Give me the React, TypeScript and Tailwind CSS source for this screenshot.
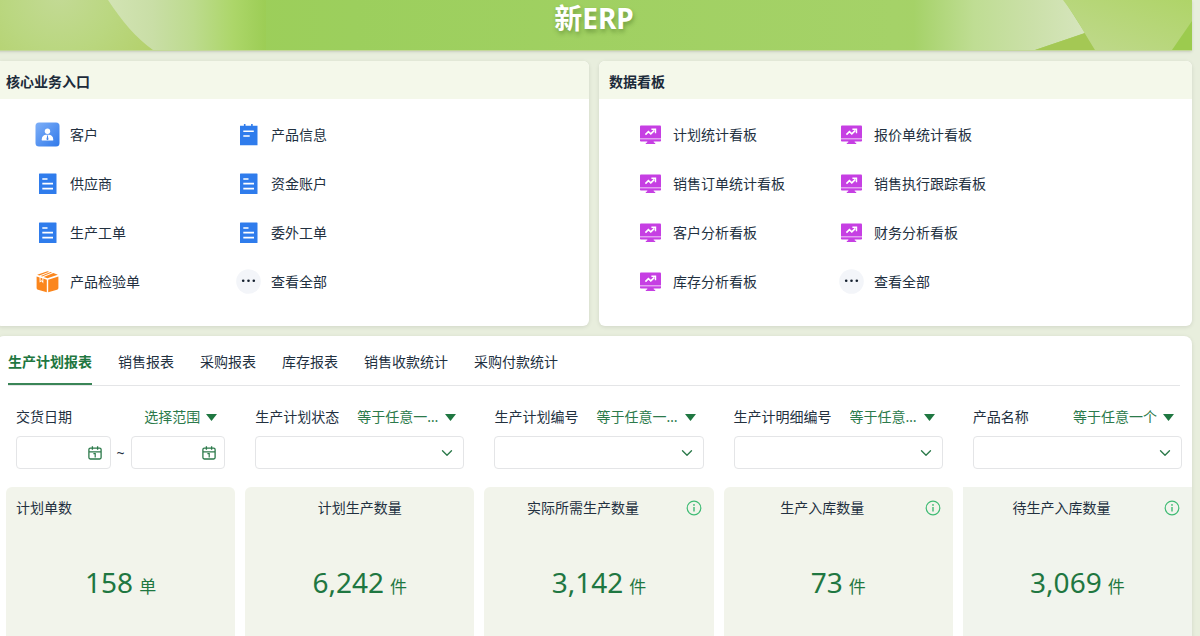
import React, { useState } from 'react'
import { ChevronDown } from 'lucide-react'
import clsx from 'clsx'

type IconName = 'customer' | 'notepad' | 'doc' | 'box' | 'monitor' | 'more'

const coreEntries: { label: string; icon: IconName }[] = [
  { label: '客户', icon: 'customer' },
  { label: '产品信息', icon: 'notepad' },
  { label: '供应商', icon: 'doc' },
  { label: '资金账户', icon: 'doc' },
  { label: '生产工单', icon: 'doc' },
  { label: '委外工单', icon: 'doc' },
  { label: '产品检验单', icon: 'box' },
  { label: '查看全部', icon: 'more' },
]

const boardEntries: { label: string; icon: IconName }[] = [
  { label: '计划统计看板', icon: 'monitor' },
  { label: '报价单统计看板', icon: 'monitor' },
  { label: '销售订单统计看板', icon: 'monitor' },
  { label: '销售执行跟踪看板', icon: 'monitor' },
  { label: '客户分析看板', icon: 'monitor' },
  { label: '财务分析看板', icon: 'monitor' },
  { label: '库存分析看板', icon: 'monitor' },
  { label: '查看全部', icon: 'more' },
]

const tabs = ['生产计划报表', '销售报表', '采购报表', '库存报表', '销售收款统计', '采购付款统计']

const selectFilters = ['生产计划状态', '生产计划编号', '生产计明细编号', '产品名称']

const stats = [
  { title: '计划单数', value: '158', unit: '单', align: 'left', info: false },
  { title: '计划生产数量', value: '6,242', unit: '件', align: 'center', info: false },
  { title: '实际所需生产数量', value: '3,142', unit: '件', align: 'center', info: true },
  { title: '生产入库数量', value: '73', unit: '件', align: 'center', info: true },
  { title: '待生产入库数量', value: '3,069', unit: '件', align: 'center', info: true },
]

function EntryIcon({ name }: { name: IconName }) {
  return (
    <svg viewBox="0 0 25 25" className="size-[25px] shrink-0" aria-hidden="true">
      {name === 'customer' && (
        <>
          <defs>
            <linearGradient id="customerBg" x1="0" y1="0" x2="1" y2="1">
              <stop offset="0" stopColor="#7fb0f8" />
              <stop offset="1" stopColor="#3079ea" />
            </linearGradient>
          </defs>
          <rect x="0.5" y="0.5" width="24" height="24" rx="3.5" fill="url(#customerBg)" />
          <circle cx="12.5" cy="9.3" r="2.7" fill="#fff" />
          <path d="M6.8 18.6v-1.4c0-2.6 2-4.4 4.4-4.4h2.6c2.4 0 4.4 1.8 4.4 4.4v1.4z" fill="#fff" />
          <path d="M11.8 13.4h1.4l-.3 1.2.7 2.6-1.1 1.1-1.1-1.1.7-2.6z" fill="#4285ee" />
        </>
      )}
      {name === 'notepad' && (
        <>
          <path d="M4 3.8h3.9V2h1.6v1.8h5.6V2h1.6v1.8h4.8V23.3H4z" fill="#2f7cec" />
          <path d="M7.3 9.3h10.5M7.3 14h6.4" stroke="#fff" strokeWidth="1.6" />
        </>
      )}
      {name === 'doc' && (
        <>
          <rect x="4" y="2.5" width="17.5" height="20.5" rx="0.6" fill="#2f7cec" />
          <path d="M7.3 8h5.2M7.3 12.6h10.7M7.3 17.6h10.7" stroke="#fff" strokeWidth="1.6" />
        </>
      )}
      {name === 'box' && (
        <>
          <path d="M1.6 7.4 4.6 8.4v5l2-1.2 1.7 2.2V9.6l3.5 1.1V23.2L3 20.7c-.8-.2-1.4-.9-1.4-1.7z" fill="#fb861d" />
          <path d="M5.5 8.7l1.9.6v2.8l-.7-.9-1.2.7z" fill="#fb861d" />
          <path d="M23.4 7.4 13.2 10.7V23.2L22 20.7c.8-.2 1.4-.9 1.4-1.7z" fill="#fb861d" />
          <path d="M2.2 5.8 12.4 2.2 14.2 2.7 4.4 6.5z" fill="#fb861d" />
          <path d="M5.8 7 15.6 3.1 17 3.5 7.2 7.4z" fill="#fb861d" />
          <path d="M8.6 7.9 18.4 4 22.8 5.8 12.5 9.2z" fill="#fb861d" />
        </>
      )}
      {name === 'monitor' && (
        <>
          <path d="M2 4.7c0-.7.5-1.2 1.2-1.2h18.6c.7 0 1.2.5 1.2 1.2v11.7H2z" fill="#c63fe3" />
          <path d="M2 17.2h21v1.4c0 .6-.5 1-1.2 1H15.6l.4 1.1h1.2v1.2H7.8v-1.2H9l.4-1.1H3.2c-.7 0-1.2-.4-1.2-1z" fill="#c63fe3" />
          <path d="m7.4 12.6 3-2.9 2.4 2.1 3.6-3.4" stroke="#fff" strokeWidth="1.7" fill="none" />
          <path d="M13.4 7.2h4.1v4" stroke="#fff" strokeWidth="1.4" fill="none" />
        </>
      )}
      {name === 'more' && (
        <>
          <circle cx="12.5" cy="12.5" r="12.3" fill="#f3f5f9" />
          <circle cx="7.2" cy="11.8" r="1.3" fill="#15202f" />
          <circle cx="12.5" cy="11.8" r="1.3" fill="#15202f" />
          <circle cx="17.8" cy="11.8" r="1.3" fill="#15202f" />
        </>
      )}
    </svg>
  )
}

function CalendarIcon() {
  return (
    <svg viewBox="0 0 14 14" className="size-3.5" fill="none" stroke="#2c7a4b" aria-hidden="true">
      <rect x="0.9" y="2.2" width="12.2" height="10.8" rx="1.4" strokeWidth="1.3" />
      <path d="M1 5.8h12M4.4.3v3.4M9.6.3v3.4" strokeWidth="1.3" />
      <path d="M5.4 7.6h1.8v3.8" strokeWidth="1.2" />
    </svg>
  )
}

function InfoIcon() {
  return (
    <svg viewBox="0 0 16 16" className="size-4" fill="none" aria-hidden="true">
      <circle cx="8" cy="8" r="6.8" stroke="#3fbb74" strokeWidth="1.2" />
      <path d="M8 7v4.6" stroke="#3fbb74" strokeWidth="1.4" />
      <circle cx="8" cy="4.9" r="0.9" fill="#3fbb74" />
    </svg>
  )
}

function Banner() {
  return (
    <header className="relative flex h-[51px] items-start justify-center border-b border-[#c3d89a] shadow-sm">
      <svg viewBox="0 0 1196 50" preserveAspectRatio="none" className="absolute inset-0 size-full" aria-hidden="true">
        <defs>
          <linearGradient id="base">
            <stop offset="0" stopColor="#9ccd52" />
            <stop offset="0.3" stopColor="#9ccf5d" />
            <stop offset="0.75" stopColor="#a5d268" />
            <stop offset="1" stopColor="#a8d160" />
          </linearGradient>
          <radialGradient id="leftLeaf" gradientUnits="userSpaceOnUse" cx="64" cy="-5" r="110">
            <stop offset="0" stopColor="#c3da95" />
            <stop offset="0.5" stopColor="#bad780" />
            <stop offset="1" stopColor="#b3d06a" />
          </radialGradient>
          <linearGradient id="leftGlow">
            <stop offset="0" stopColor="#d3e4b5" />
            <stop offset="0.3" stopColor="#c9dea6" />
            <stop offset="0.55" stopColor="#bddb8e" />
            <stop offset="0.8" stopColor="#acd669" />
            <stop offset="1" stopColor="#9ccd55" />
          </linearGradient>
          <linearGradient id="rightGlow">
            <stop offset="0" stopColor="#a5d268" />
            <stop offset="0.35" stopColor="#bfdd93" />
            <stop offset="0.7" stopColor="#cbe0a9" />
            <stop offset="1" stopColor="#d6e5bd" />
          </linearGradient>
          <linearGradient id="rightLeaf" x1="0" y1="1" x2="1" y2="0">
            <stop offset="0" stopColor="#c0d98e" />
            <stop offset="1" stopColor="#afd468" />
          </linearGradient>
        </defs>
        <rect width="1196" height="50" fill="url(#base)" />
        <path d="M108 0h162v50H156C138 37 122 19 108 0z" fill="url(#leftGlow)" />
        <path d="M0 0h112c14 21 28 38 45 50H0z" fill="url(#leftLeaf)" />
        <path d="M918 0h150l21 33-50 17H918z" fill="url(#rightGlow)" />
        <path d="M1039 50l50-17 10 17z" fill="#a4c854" />
        <path d="M1067 0h129v50h-97l-11-18c-6-11-13-22-21-32z" fill="url(#rightLeaf)" />
        <path d="M1176 50l20-29v29z" fill="#9ccb4e" />
      </svg>
      <h1 className="relative text-[28px] leading-9 font-bold text-white [text-shadow:1px_3px_4px_rgba(50,90,20,0.4)]">
        新ERP
      </h1>
    </header>
  )
}

function EntryPanel({ title, entries }: { title: string; entries: { label: string; icon: IconName }[] }) {
  return (
    <section className="overflow-hidden rounded-md bg-white shadow-[0_1px_4px_rgba(0,0,0,0.1)]">
      <h2 className="h-[38px] bg-[#f4f8ea] px-2.5 pt-0.5 text-sm leading-[38px] font-bold text-[#1c2b3a]">{title}</h2>
      <nav className="grid grid-cols-[repeat(2,201px)] pt-[11px] pb-5 pl-[39px]">
        {entries.map((entry) => (
          <a key={entry.label} href="#" className="flex h-[49px] items-center gap-2.5">
            <EntryIcon name={entry.icon} />
            {entry.label}
          </a>
        ))}
      </nav>
    </section>
  )
}

function OperatorSelect({ label, options }: { label: string; options: string[] }) {
  return (
    <div className="flex min-w-0 items-center gap-1.5 pr-2 text-[#2c7a4b]">
      <select aria-label={`${label}条件`} className="min-w-0 cursor-pointer appearance-none truncate bg-transparent">
        {options.map((option) => (
          <option key={option}>{option}</option>
        ))}
      </select>
      <svg viewBox="0 0 11 7" className="h-[7px] w-[11px] shrink-0" aria-hidden="true">
        <path d="M0 0h11L5.5 7z" fill="#1f7741" />
      </svg>
    </div>
  )
}

function DateField({ label }: { label: string }) {
  return (
    <div className="flex h-[33px] min-w-0 flex-1 items-center rounded border border-[#e4e5e7] pr-2">
      <input type="text" aria-label={label} className="min-w-0 flex-1 bg-transparent pl-2 outline-none" />
      <button type="button" aria-label={`选择${label}`}>
        <CalendarIcon />
      </button>
    </div>
  )
}

function Filters() {
  return (
    <div className="grid grid-cols-5 gap-x-2.5 pt-[19px] pb-[18px] pl-2.5">
      <div className="min-w-0 px-2.5">
        <div className="flex h-6 items-center justify-between gap-[18px]">
          <span className="shrink-0">交货日期</span>
          <OperatorSelect label="交货日期" options={['选择范围']} />
        </div>
        <div className="mt-[7px] flex items-center">
          <DateField label="开始日期" />
          <span className="w-5 text-center">~</span>
          <DateField label="结束日期" />
        </div>
      </div>
      {selectFilters.map((name) => (
        <div key={name} className="min-w-0 px-2.5">
          <div className="flex h-6 items-center justify-between gap-[18px]">
            <label htmlFor={name} className="shrink-0">
              {name}
            </label>
            <OperatorSelect label={name} options={['等于任意一个']} />
          </div>
          <div className="relative mt-[7px]">
            <select id={name} className="h-[33px] w-full appearance-none rounded border border-[#e4e5e7] bg-white px-2">
              <option value="" />
            </select>
            <ChevronDown
              className="pointer-events-none absolute top-2 right-2 size-[18px] text-[#2c7a4b]"
              strokeWidth={1.8}
            />
          </div>
        </div>
      ))}
    </div>
  )
}

export default function App() {
  const [activeTab, setActiveTab] = useState(tabs[0])

  return (
    <div className="overflow-hidden bg-[#e8eedd] font-['Noto_Sans','Noto_Sans_CJK_SC',sans-serif] text-sm text-[#22303f]">
      <div className="-ml-1 flex min-h-screen flex-col gap-2.5 pr-2">
        <Banner />

        <div className="grid grid-cols-2 gap-2.5">
          <EntryPanel title="核心业务入口" entries={coreEntries} />
          <EntryPanel title="数据看板" entries={boardEntries} />
        </div>

        <section className="flex flex-1 flex-col rounded-t-lg bg-white shadow-[0_1px_4px_rgba(0,0,0,0.1)]">
          <div role="tablist" className="mr-3 ml-3 flex gap-[26px] border-b border-[#e4e5e7]">
            {tabs.map((tab) => (
              <button
                key={tab}
                type="button"
                role="tab"
                aria-selected={tab === activeTab}
                onClick={() => setActiveTab(tab)}
                className={clsx(
                  'h-[49px] border-b-2 pt-1',
                  tab === activeTab ? 'border-[#3a8557] font-bold text-[#1f7741]' : 'border-transparent',
                )}
              >
                {tab}
              </button>
            ))}
          </div>

          <Filters />

          {/* 统计卡片 */}
          <div className="grid flex-1 grid-cols-5 gap-x-2.5 pl-2.5">
            {stats.map((stat) => (
              <article
                key={stat.title}
                className="rounded-t-md bg-[#f2f4eb] px-2.5 pt-2.5 pb-8 last:rounded-none last:bg-[#f1f4ed]"
              >
                <div className="flex h-[22px] items-center">
                  <h3 className={clsx('flex-1', stat.align === 'center' && 'text-center')}>{stat.title}</h3>
                  {stat.info && (
                    <button type="button" aria-label={`${stat.title}说明`} className="flex w-8 justify-end pr-0.5">
                      <InfoIcon />
                    </button>
                  )}
                </div>
                <p className="pt-[43px] text-center text-[28px] leading-10 text-[#1f7741]">
                  {stat.value}
                  <span className="ml-1.5 text-[17px]">{stat.unit}</span>
                </p>
              </article>
            ))}
          </div>
        </section>
      </div>
    </div>
  )
}
